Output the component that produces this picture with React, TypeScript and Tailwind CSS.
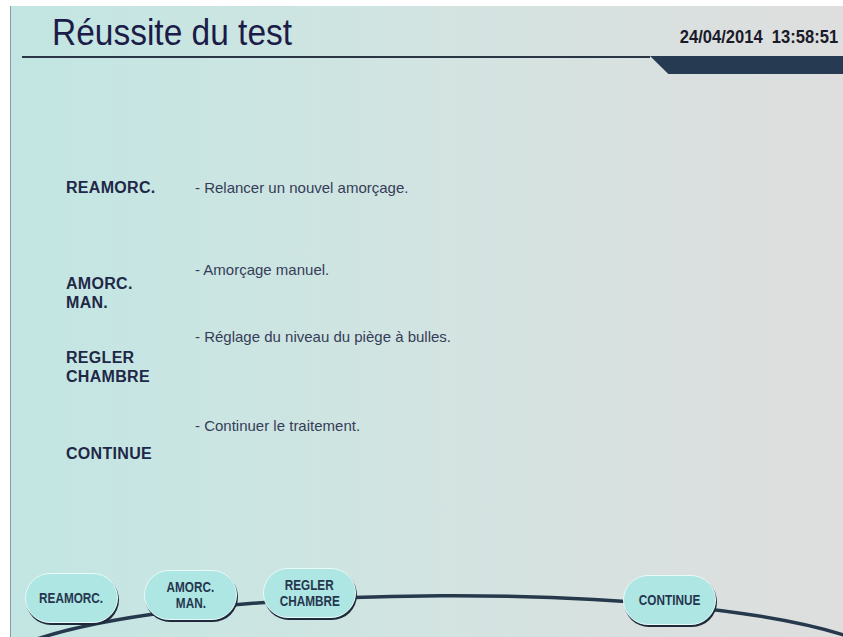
import React from 'react';

const items = [
  { label: ['REAMORC.'], desc: '- Relancer un nouvel amorçage.', mt: 'mt-[104px]', pt: 'pt-0' },
  { label: ['AMORC.', 'MAN.'], desc: '- Amorçage manuel.', mt: 'mt-[62px]', pt: 'pt-[14px]' },
  { label: ['REGLER', 'CHAMBRE'], desc: '- Réglage du niveau du piège à bulles.', mt: 'mt-[15px]', pt: 'pt-[21px]' },
  { label: ['CONTINUE'], desc: '- Continuer le traitement.', mt: 'mt-[30px]', pt: 'pt-[28px]' },
];

const buttons = [
  { label: ['REAMORC.'], cls: 'mt-[5px]' },
  { label: ['AMORC.', 'MAN.'], cls: 'mt-[2px] ml-[26px]' },
  { label: ['REGLER', 'CHAMBRE'], cls: 'mt-0 ml-[26px]' },
  { label: ['CONTINUE'], cls: 'mt-[7px] ml-[267px]' },
];

export default function App() {
  return (
    <div className="relative w-[843px] h-[637px] bg-white pt-[6px] pl-[10px] overflow-hidden font-['Liberation_Sans',Arial,sans-serif]">
      <div className="relative flex flex-col h-[631px] border-l border-[#8a9c9c] bg-gradient-to-r from-[#c2e6e3] via-[#d2e4e1] to-[#dedede]">
        {/* Header */}
        <div className="flex items-start justify-between h-[50px] pt-[9px] pl-[41px] pr-[5px]">
          <h1 className="text-[36px] leading-[36px] text-[#1b1c48] origin-left scale-x-[0.93]">Réussite du test</h1>
          <div className="mt-[12px] text-[18px] leading-[20px] font-bold text-[#1a1a2a] whitespace-pre origin-right scale-x-[0.92]">
            24/04/2014  13:58:51
          </div>
        </div>
        <div className="flex items-start ml-[11px]">
          <div className="flex-1 h-[2px] bg-[#2a3545]" />
          <div className="w-[193px] h-[18px] bg-[#263a52] [clip-path:polygon(0_0,100%_0,100%_100%,9.5%_100%)]" />
        </div>

        {/* Explanations */}
        {items.map((it) => (
          <div key={it.desc} className={`flex pl-[55px] ${it.mt}`}>
            <div className={`w-[129px] ${it.pt} text-[16px] leading-[19px] font-bold text-[#1f2847] tracking-[0.3px]`}>
              {it.label.map((l) => (
                <div key={l}>{l}</div>
              ))}
            </div>
            <div className="text-[15px] leading-[20px] text-[#363d58]">{it.desc}</div>
          </div>
        ))}

        {/* Bottom buttons */}
        <div className="mt-auto flex items-start pl-[14px] pb-[12px]">
          {buttons.map((b) => (
            <button
              key={b.label.join(' ')}
              className={`relative z-10 w-[93px] h-[50px] rounded-full bg-[#ade6e3] border border-[#e8fbfa] shadow-[1px_2px_0_#1e2a3a] flex flex-col items-center justify-center text-[14px] leading-[16px] font-bold text-[#27364f] ${b.cls}`}
            >
              {b.label.map((l) => (
                <span key={l} className="block scale-x-[0.84]">{l}</span>
              ))}
            </button>
          ))}
        </div>
      </div>

      {/* Curved track behind buttons */}
      <svg className="absolute inset-0 pointer-events-none" width="843" height="637" viewBox="0 0 843 637">
        <path d="M 34 640 C 200 583, 680 580, 850 637" fill="none" stroke="#26384c" strokeWidth="3.5" />
      </svg>
    </div>
  );
}
